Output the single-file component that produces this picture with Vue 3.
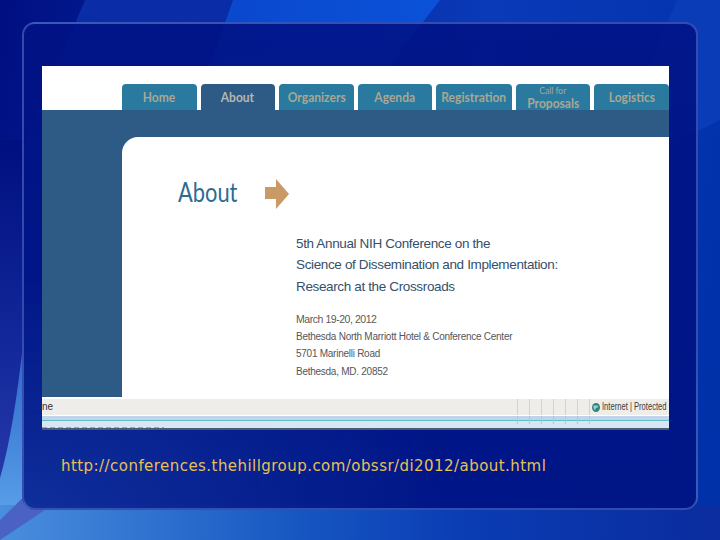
<script setup>
const tabs = [
  { label: 'Home' },
  { label: 'About', active: true },
  { label: 'Organizers' },
  { label: 'Agenda' },
  { label: 'Registration' },
  { small: 'Call for', label: 'Proposals' },
  { label: 'Logistics' }
]
const ticks = [0, 1, 2, 3, 4, 5, 6]
</script>

<template>
  <div class="slide">
    <svg class="streaks" width="720" height="540" viewBox="0 0 720 540">
      <defs>
        <linearGradient id="s2" x1="0" y1="0" x2="1" y2="0">
          <stop offset="0" stop-color="#0a46cc" />
          <stop offset="1" stop-color="#0a52d8" />
        </linearGradient>
        <linearGradient id="left" x1="0" y1="0" x2="0" y2="1">
          <stop offset="0" stop-color="#000f80" />
          <stop offset="0.55" stop-color="#142a9c" />
          <stop offset="1" stop-color="#2f3fae" />
        </linearGradient>
        <linearGradient id="wedge" x1="0" y1="0" x2="0" y2="1">
          <stop offset="0" stop-color="#2a62c8" />
          <stop offset="1" stop-color="#5aa2ea" />
        </linearGradient>
        <linearGradient id="bottom" x1="0" y1="0" x2="1" y2="0">
          <stop offset="0" stop-color="#4a8ede" />
          <stop offset="0.4" stop-color="#1758c2" />
          <stop offset="0.65" stop-color="#0a3cb4" />
          <stop offset="1" stop-color="#0a2c9e" />
        </linearGradient>
      </defs>
      <path d="M85 0H233L130 300L0 400V200Z" fill="#0a2ca6" />
      <path d="M233 0H440L300 180H170Z" fill="url(#s2)" />
      <path d="M677 0H720V120L600 180Z" fill="#0a3cb8" />
      <rect x="0" y="140" width="24" height="400" fill="url(#left)" />
      <path d="M24 335Q14 430 0 478V520L24 497Z" fill="url(#wedge)" />
      <rect x="0" y="505" width="720" height="35" fill="url(#bottom)" />
      <path d="M0 520L24 497L45 510L0 540Z" fill="#4a62c4" />
    </svg>

    <div class="panel">
      <div class="site">
        <div class="site-head">
          <div
            v-for="tab in tabs"
            :key="tab.label"
            class="tab"
            :class="{ active: tab.active, double: tab.small }"
          >
            <span v-if="tab.small" class="tab-small">{{ tab.small }}</span>
            <span class="tab-label">{{ tab.label }}</span>
          </div>
        </div>

        <div class="site-main">
          <div class="card">
            <div class="title-row">
              <h1>About</h1>
              <svg class="arrow" width="24" height="30" viewBox="0 0 24 30">
                <path d="M0 8H11V0L24 15L11 30V20H0Z" fill="#c99a66" />
              </svg>
            </div>
            <div class="info">
              <p class="lead">5th Annual NIH Conference on the</p>
              <p class="lead">Science of Dissemination and Implementation:</p>
              <p class="lead">Research at the Crossroads</p>
              <p class="date">March 19-20, 2012</p>
              <p class="addr">Bethesda North Marriott Hotel &amp; Conference Center</p>
              <p class="addr">5701 Marinelli Road</p>
              <p class="addr">Bethesda, MD. 20852</p>
            </div>
          </div>
        </div>

        <div class="status">
          <span class="done">ne</span>
          <div class="cells">
            <i v-for="t in ticks" :key="t"></i>
          </div>
          <svg class="globe" width="8" height="9" viewBox="0 0 8 9">
            <ellipse cx="4" cy="4.5" rx="4" ry="4.5" fill="#2f8480" />
            <path d="M1.5 2.5H5.5L6.5 4L4 5L3 7.5L1.5 5Z" fill="#9ed0ca" />
          </svg>
          <div class="zone"><span>Internet | Protected</span></div>
        </div>
        <div class="taskbar">
          <div class="taskbar-ticks">
            <i v-for="t in ticks" :key="t"></i>
          </div>
          <div class="taskbar-marks"></div>
        </div>
      </div>

      <p class="url">http://conferences.thehillgroup.com/obssr/di2012/about.html</p>
    </div>
  </div>
</template>

<style scoped>
.slide {
  position: relative;
  width: 720px;
  height: 540px;
  box-sizing: border-box;
  padding: 22px;
  overflow: hidden;
  background: linear-gradient(100deg, #000f82 0%, #0a3ab8 60%, #0030a8 100%);
}

.streaks {
  position: absolute;
  left: 0;
  top: 0;
}

.panel {
  position: relative;
  height: 488px;
  box-sizing: border-box;
  padding: 42px 27px 0 18px;
  border: 2px solid rgba(120, 150, 230, 0.42);
  border-radius: 13px;
  background:
    radial-gradient(420px 240px at 0 100%, rgba(18, 54, 160, 0.8), rgba(18, 54, 160, 0)),
    linear-gradient(rgba(0, 18, 132, 0.88), rgba(0, 20, 132, 0.94));
}

.site {
  display: flex;
  flex-direction: column;
  width: 627px;
  height: 364px;
  background: #fff;
  overflow: hidden;
}

.site-head {
  display: flex;
  gap: 4px;
  height: 44px;
  box-sizing: border-box;
  padding: 18px 0 0 80px;
  flex: none;
}

.tab {
  display: flex;
  flex: 1;
  flex-direction: column;
  align-items: center;
  justify-content: center;
  border-radius: 4px 4px 0 0;
  background: #2a7a9f;
  color: #a9a793;
  font: 700 14px/1 Lato, sans-serif;
}

.tab-label {
  transform: scaleX(0.86);
  white-space: nowrap;
}

.tab.active {
  background: #2e5a86;
  color: #b4b8b0;
}

.tab.double {
  justify-content: flex-start;
  padding-top: 1px;
  line-height: 13px;
}

.tab-small {
  font-size: 10px;
  font-weight: 400;
  line-height: 11px;
  transform: scaleX(0.86);
  white-space: nowrap;
}

.site-main {
  flex: none;
  height: 287px;
  box-sizing: border-box;
  padding: 27px 0 0 80px;
  background: #2e5a86;
}

.card {
  height: 260px;
  box-sizing: border-box;
  padding: 42px 0 0 56px;
  border-top-left-radius: 16px;
  background: #fff;
}

.title-row {
  display: flex;
  align-items: center;
  gap: 28px;
  height: 30px;
}

h1 {
  margin: 0 0 4px;
  width: 59px;
  color: #2c6c90;
  font: 400 27px/30px Lato, sans-serif;
  white-space: nowrap;
  transform: scaleX(0.81);
  transform-origin: left center;
}

.info {
  margin: 24px 0 0 118px;
  font-family: "Liberation Sans", Arial, sans-serif;
}

.info p {
  margin: 0;
  white-space: nowrap;
}

.lead {
  color: #34506a;
  font-size: 13.5px;
  letter-spacing: -0.36px;
  line-height: 21.3px;
}

.info .date {
  margin-top: 13px;
  color: #5a5a58;
  font-size: 10.5px;
  letter-spacing: -0.45px;
  line-height: 18px;
}

.addr {
  color: #55565a;
  font-size: 10px;
  letter-spacing: -0.26px;
  line-height: 17.5px;
}

.status {
  display: flex;
  align-items: center;
  flex: none;
  height: 16px;
  margin-top: 2px;
  background: #efedea;
  font: 10px/16px "Liberation Sans", Arial, sans-serif;
  color: #333;
}

.done {
  flex: 1;
}

.cells {
  display: flex;
}

.cells i {
  width: 11px;
  height: 16px;
  border-left: 1px solid #d4d2ce;
}

.cells i:last-child {
  width: 2px;
}

.globe {
  margin-right: 2px;
  flex: none;
}

.zone {
  width: 67px;
  overflow: hidden;
  color: #3a3a3a;
}

.zone span {
  display: block;
  width: 88px;
  white-space: nowrap;
  transform: scaleX(0.76);
  transform-origin: left center;
}

.taskbar {
  display: flex;
  flex-direction: column;
  flex: none;
  height: 14px;
  margin-top: 1px;
  box-sizing: border-box;
  background: linear-gradient(#c0d5ea 0 4px, #5fbcc8 4px 5px, #d8e6f2 5px);
  border-bottom: 2px solid #4a5a78;
}

.taskbar-ticks {
  display: flex;
  justify-content: flex-end;
  height: 9px;
  padding-right: 77px;
}

.taskbar-ticks i {
  width: 11px;
  height: 8px;
  border-left: 1px solid #b4c6da;
}

.taskbar-ticks i:last-child {
  width: 2px;
}

.taskbar-marks {
  width: 122px;
  height: 1px;
  margin-top: 2px;
  background: repeating-linear-gradient(90deg, #98a6bc 0 5px, transparent 5px 8px);
}

.url {
  margin: 26px 0 0 19px;
  color: #e8c055;
  font: 15px/20px "DejaVu Sans", sans-serif;
  letter-spacing: 0.45px;
  white-space: nowrap;
}
</style>
